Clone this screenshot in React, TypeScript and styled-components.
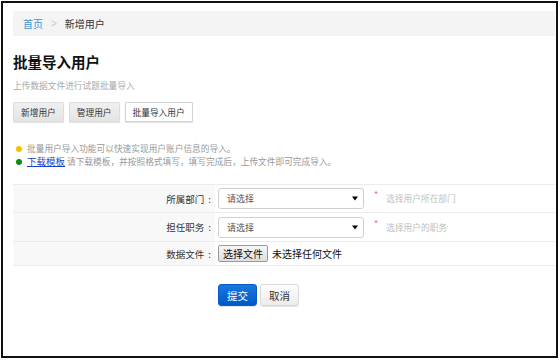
import styled, { createGlobalStyle } from 'styled-components';

const GlobalStyle = createGlobalStyle`
    html, body {
        margin: 0;
        padding: 0;
        background: #fff;
    }
    body {
        font-family: "Noto Sans CJK SC", "Noto Sans", sans-serif;
        color: #333;
    }
`;

// -- COMPONENTS --
const Frame = styled.div`
    box-sizing: border-box;
    margin: 1px 0 0 1px;
    width: 557px;
    height: 357px;
    border: 2px solid #111;
    padding: 8px 1px 0 10px;
    display: flex;
    flex-direction: column;
`;

const Breadcrumb = styled.div`
    height: 25px;
    background: #f4f4f4;
    display: flex;
    align-items: center;
    padding-left: 10px;
    gap: 8px;
    font-size: 10px;
`;

const Crumb = styled.span<{ $link?: boolean }>`
    color: ${p => (p.$link ? '#3a96d8' : '#333')};
`;

const CrumbSep = styled.span`
    color: #c8c8c8;
    font-family: "Liberation Sans", sans-serif;
    font-size: 10px;
`;

const PageTitle = styled.h1`
    margin: 16px 0 0 0;
    font-size: 14.5px;
    line-height: 20px;
    font-weight: bold;
    color: #111;
`;

const SubTitle = styled.p`
    margin: 7px 0 0 0;
    font-size: 8.7px;
    line-height: 14px;
    color: #aaa;
`;

const TabBar = styled.div`
    display: flex;
    gap: 5px;
    margin-top: 9px;
`;

const TabButton = styled.button<{ $active?: boolean }>`
    box-sizing: border-box;
    height: 20px;
    padding: 0 7px;
    font-family: inherit;
    font-size: 8.7px;
    color: #333;
    border: 1px solid ${p => (p.$active ? '#d4d4d4' : '#dcdcdc')};
    background: ${p => (p.$active ? '#fff' : 'linear-gradient(#f0f0f0, #e4e4e4)')};
    box-shadow: 0 1px 1px rgba(0, 0, 0, 0.12);
    border-radius: 1px;
`;

const Notes = styled.ul`
    list-style: none;
    margin: 20px 0 0 0;
    padding: 0 0 0 3px;
    display: flex;
    flex-direction: column;
`;

const Note = styled.li`
    display: flex;
    align-items: center;
    gap: 5px;
    font-size: 8.7px;
    line-height: 13px;
    color: #999;
`;

const Dot = styled.span<{ $color: string }>`
    width: 6px;
    height: 6px;
    border-radius: 50%;
    background: ${p => p.$color};
    flex-shrink: 0;
`;

const NoteLink = styled.a`
    color: #1a3fd0;
    text-decoration: underline;
    font-size: 9.5px;
`;

const Form = styled.div`
    margin-top: 16px;
    border-top: 1px solid #ececec;
    display: flex;
    flex-direction: column;
`;

const FormRow = styled.div<{ $h: number }>`
    display: grid;
    grid-template-columns: 202px 1fr;
    height: ${p => p.$h}px;
    border-bottom: 1px solid #ececec;
`;

const Label = styled.div`
    background: #f8f8f8;
    display: flex;
    align-items: center;
    justify-content: flex-end;
    padding-right: 4px;
    font-size: 9.5px;
    color: #333;
`;

const Colon = styled.span`
    margin-left: 4px;
`;

const Field = styled.div`
    display: flex;
    align-items: center;
    padding-left: 3px;
`;

const SelectBox = styled.div`
    box-sizing: border-box;
    width: 146px;
    height: 21px;
    border: 1px solid #cfcfcf;
    border-radius: 3px;
    display: flex;
    align-items: center;
    justify-content: space-between;
    padding: 0 5px 0 8px;
    font-size: 9px;
    color: #555;
`;

const Caret = () => (
    <svg width="6" height="5" viewBox="0 0 6 5">
        <path d="M0 0.5 H6 L3 4.5 Z" fill="#000" />
    </svg>
);

const Required = styled.span`
    color: #f36a6a;
    font-size: 9px;
    margin: -8px 0 0 10px;
`;

const Hint = styled.span`
    margin-left: 8px;
    font-size: 8.7px;
    color: #bdbdbd;
`;

const FileButton = styled.button`
    box-sizing: border-box;
    width: 50px;
    height: 17px;
    padding: 0;
    font-family: inherit;
    font-size: 10px;
    color: #111;
    border: 1px solid #9a9a9a;
    border-radius: 2px;
    background: linear-gradient(#f6f6f6, #dedede);
`;

const FileText = styled.span`
    margin-left: 4px;
    font-size: 10px;
    color: #111;
`;

const Actions = styled.div`
    display: flex;
    gap: 3px;
    margin: 18px 0 0 205px;
`;

const ActionButton = styled.button<{ $primary?: boolean }>`
    box-sizing: border-box;
    width: 39px;
    height: 22px;
    padding: 0;
    font-family: inherit;
    font-size: 10.5px;
    border-radius: 3px;
    color: ${p => (p.$primary ? '#fff' : '#333')};
    border: 1px solid ${p => (p.$primary ? '#0a5cc4' : '#d8d8d8')};
    background: ${p => (p.$primary ? 'linear-gradient(#1978e0, #0058c8)' : 'linear-gradient(#fdfdfd, #ececec)')};
    box-shadow: 0 1px 1px rgba(0, 0, 0, 0.12);
`;

const App = () => {
    return (
        <>
            <GlobalStyle />
            <Frame>
                <Breadcrumb>
                    <Crumb $link>首页</Crumb>
                    <CrumbSep>&gt;</CrumbSep>
                    <Crumb>新增用户</Crumb>
                </Breadcrumb>

                <PageTitle>批量导入用户</PageTitle>
                <SubTitle>上传数据文件进行试题批量导入</SubTitle>

                <TabBar>
                    <TabButton>新增用户</TabButton>
                    <TabButton>管理用户</TabButton>
                    <TabButton $active>批量导入用户</TabButton>
                </TabBar>

                <Notes>
                    <Note>
                        <Dot $color="#f6c200" />
                        批量用户导入功能可以快速实现用户账户信息的导入。
                    </Note>
                    <Note>
                        <Dot $color="#0c8c10" />
                        <span><NoteLink href="#">下载模板</NoteLink> 请下载模板，并按照格式填写，填写完成后，上传文件即可完成导入。</span>
                    </Note>
                </Notes>

                <Form>
                    <FormRow $h={27}>
                        <Label>所属部门<Colon>:</Colon></Label>
                        <Field>
                            <SelectBox>请选择<Caret /></SelectBox>
                            <Required>*</Required>
                            <Hint>选择用户所在部门</Hint>
                        </Field>
                    </FormRow>
                    <FormRow $h={28}>
                        <Label>担任职务<Colon>:</Colon></Label>
                        <Field>
                            <SelectBox>请选择<Caret /></SelectBox>
                            <Required>*</Required>
                            <Hint>选择用户的职务</Hint>
                        </Field>
                    </FormRow>
                    <FormRow $h={23}>
                        <Label>数据文件<Colon>:</Colon></Label>
                        <Field>
                            <FileButton>选择文件</FileButton>
                            <FileText>未选择任何文件</FileText>
                        </Field>
                    </FormRow>
                </Form>

                <Actions>
                    <ActionButton $primary>提交</ActionButton>
                    <ActionButton>取消</ActionButton>
                </Actions>
            </Frame>
        </>
    );
};

export default App;
